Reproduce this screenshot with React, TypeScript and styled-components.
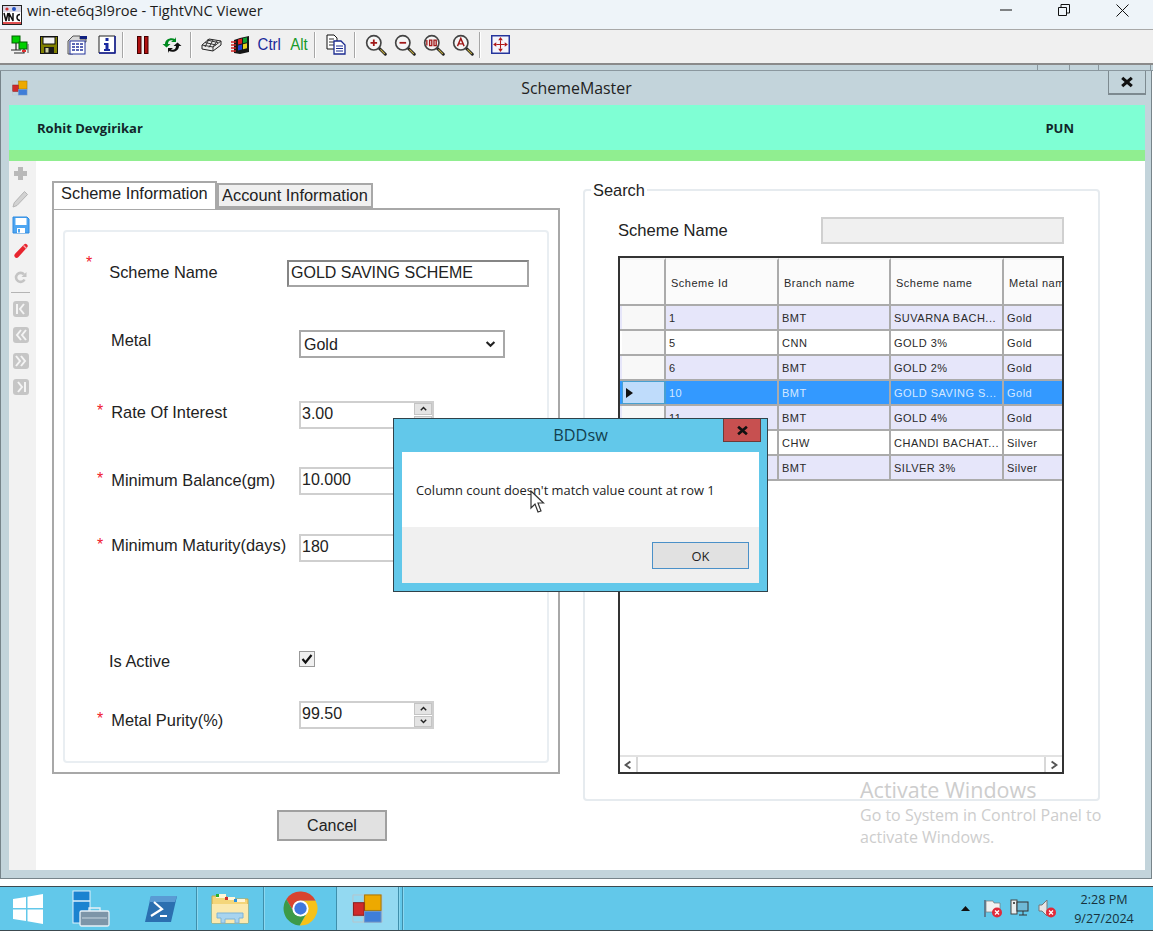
import React from "react";
import styled, { createGlobalStyle } from "styled-components";

const GlobalStyle = createGlobalStyle`
  html, body {
    margin: 0;
    padding: 0;
    background: #ffffff;
  }
  * {
    box-sizing: border-box;
  }
`;

const Screen = styled.div`
  position: relative;
  width: 1153px;
  height: 931px;
  overflow: hidden;
  display: flex;
  flex-direction: column;
  background: #ffffff;
  font-family: "Liberation Sans", Arial, sans-serif;
  color: #222;
`;

/* ---------- viewer chrome ---------- */

const ViewerTitle = styled.div`
  height: 29px;
  flex: none;
  display: flex;
  align-items: center;
  background: #eef4f9;
  padding-left: 2px;
`;

const ViewerCaption = styled.span`
  font-family: "Open Sans", sans-serif;
  font-size: 14.6px;
  color: #1c1c1c;
  margin-left: 5px;
  flex: 1;
  padding-bottom: 9px;
`;

const ViewerControl = styled.div`
  width: 58px;
  height: 29px;
  display: flex;
  align-items: center;
  justify-content: center;
  padding-bottom: 9px;
  margin-right: ${(p: { $right?: number }) => p.$right ?? 0}px;
`;

const Toolbar = styled.div`
  height: 36px;
  flex: none;
  display: flex;
  align-items: center;
  padding: 0 0 4px 5px;
  background: #f0f0f0;
  border-top: 1px solid #a8a8a8;
  border-bottom: 2px solid #8a8a8a;
`;

const ToolButton = styled.div`
  width: 29px;
  height: 28px;
  flex: none;
  display: flex;
  align-items: center;
  justify-content: center;
`;

const ToolText = styled.span<{ $color: string }>`
  font-size: 17px;
  color: ${(p) => p.$color};
  transform: scaleX(0.88);
`;

const ToolSep = styled.div<{ $left: number; $right: number }>`
  width: 2px;
  height: 26px;
  flex: none;
  margin: 0 ${(p) => p.$right}px 0 ${(p) => p.$left}px;
  background: #a6a6a6;
  border-right: 1px solid #ffffff;
`;

/* ---------- remote window ---------- */

const RemoteStrip = styled.div`
  height: 6px;
  flex: none;
  display: flex;
  justify-content: flex-end;
  background: #c3d4db;
  border-bottom: 1px solid #8a979e;
`;

const StripCell = styled.div<{ $width: number }>`
  width: ${(p) => p.$width}px;
  border-left: 1px solid #8a979e;
`;

const RemoteWindow = styled.div`
  width: 1152px;
  height: 808px;
  flex: none;
  display: flex;
  flex-direction: column;
  background: #c3d4db;
  border-left: 1px solid #77848a;
  border-right: 1px solid #77848a;
  border-bottom: 1px solid #77848a;
  padding: 0 6px 8px 8px;
`;

const WindowTitle = styled.div`
  height: 34px;
  flex: none;
  display: flex;
  align-items: flex-start;
  margin-left: -8px;
  margin-right: -6px;
`;

const WindowIconWrap = styled.div`
  width: 36px;
  padding: 9px 0 0 11px;
  flex: none;
`;

const WindowCaption = styled.div`
  flex: 1;
  text-align: center;
  font-family: "Open Sans", sans-serif;
  font-size: 15.9px;
  line-height: 35px;
  color: #222;
  padding-left: 8px;
`;

const WindowClose = styled.div`
  width: 38px;
  height: 24px;
  margin-right: 5px;
  display: flex;
  align-items: center;
  justify-content: center;
  border: 1px solid #7d8a90;
  border-top: none;
  border-bottom-width: 2px;
`;

const GreenBar = styled.div`
  height: 45px;
  flex: none;
  display: flex;
  align-items: center;
  justify-content: space-between;
  padding: 0 71px 0 28px;
  background: #7fffd4;
  font-family: "Open Sans", sans-serif;
  font-weight: 700;
  font-size: 13px;
  color: #12262a;
`;

const GreenLine = styled.div`
  height: 11px;
  flex: none;
  background: #90ee90;
`;

const WindowBody = styled.div`
  flex: 1;
  min-height: 0;
  display: flex;
  background: #ffffff;
`;

/* ---------- side toolbar ---------- */

const SideBar = styled.div`
  width: 27px;
  flex: none;
  display: flex;
  flex-direction: column;
  padding-right: 4px;
  background: #f2f2f2;

  > :first-child {
    height: 25px;
  }
`;

const SideButton = styled.div`
  height: 26px;
  flex: none;
  display: flex;
  align-items: center;
  justify-content: center;
`;

const SideSep = styled.div`
  height: 1px;
  flex: none;
  margin: 2px 2px 3px;
  background: #b4b4b4;
`;

/* ---------- left form ---------- */

const FormColumn = styled.div`
  width: 524px;
  flex: none;
  padding: 20px 0 0 16px;
`;

const TabStrip = styled.div`
  height: 27px;
  display: flex;
  align-items: flex-end;
`;

const Tab = styled.div<{ $active?: boolean }>`
  height: ${(p) => (p.$active ? 28 : 25)}px;
  width: ${(p) => (p.$active ? 165 : 156)}px;
  display: flex;
  align-items: center;
  padding-left: ${(p) => (p.$active ? 7 : 3)}px;
  padding-bottom: ${(p) => (p.$active ? 5 : 0)}px;
  font-size: 16.4px;
  color: #222;
  background: ${(p) => (p.$active ? "#ffffff" : "#f0f0f0")};
  border: 2px solid #a8a8a8;
  border-bottom: ${(p) => (p.$active ? "none" : "2px solid #a8a8a8")};
  margin-bottom: ${(p) => (p.$active ? -1 : 0)}px;
  position: relative;
  z-index: ${(p) => (p.$active ? 1 : 0)};
`;

const TabPage = styled.div`
  width: 508px;
  height: 566px;
  padding: 20px 9px 9px 9px;
  border: 2px solid #a8a8a8;
`;

const FormGroup = styled.div`
  height: 533px;
  border: 2px solid #e9eef2;
  border-radius: 4px;
`;

const FieldRow = styled.div<{ $top: number }>`
  display: flex;
  align-items: flex-start;
  margin-top: ${(p) => p.$top}px;
`;

const LabelCell = styled.div<{ $width: number; $pad: number }>`
  width: ${(p) => p.$width}px;
  flex: none;
  display: flex;
  align-items: flex-start;
  padding-left: ${(p) => p.$pad}px;
`;

const Star = styled.span<{ $top: number; $gap: number }>`
  font-size: 16px;
  line-height: 16px;
  color: #f0202c;
  margin-top: ${(p) => p.$top}px;
  margin-right: ${(p) => p.$gap}px;
`;

const FieldLabel = styled.span<{ $top: number }>`
  font-size: 16.4px;
  line-height: 18px;
  color: #222;
  margin-top: ${(p) => p.$top}px;
  white-space: nowrap;
`;

const TextBox = styled.input`
  width: 242px;
  height: 27px;
  padding: 0 0 2px 2px;
  border: 2px solid #a4a4a4;
  border-top-color: #858585;
  border-left-color: #858585;
  background: #ffffff;
  font: 16px "Liberation Sans", Arial, sans-serif;
  color: #222;
  outline: none;
`;

const SelectBox = styled.div`
  width: 206px;
  height: 28px;
  display: flex;
  align-items: center;
  justify-content: space-between;
  padding: 1px 6px 0 3px;
  border: 2px solid #a8a8a8;
  font-size: 16px;
`;

const SpinBox = styled.div`
  width: 135px;
  height: 28px;
  display: flex;
  border: 2px solid #cfcfcf;
  background: #ffffff;
`;

const SpinValue = styled.div`
  flex: 1;
  font-size: 16px;
  line-height: 22px;
  padding-left: 1px;
`;

const SpinButtons = styled.div`
  width: 18px;
  flex: none;
  display: flex;
  flex-direction: column;
  gap: 1px;
`;

const SpinButton = styled.div`
  flex: 1;
  display: flex;
  align-items: center;
  justify-content: center;
  background: #e4e4e4;
  border: 1px solid #c4c4c4;
`;

const CheckBox = styled.div`
  width: 16px;
  height: 16px;
  display: flex;
  align-items: center;
  justify-content: center;
  border: 1px solid #999;
  background: #f0f0f0;
`;

const CancelButton = styled.div`
  width: 110px;
  height: 31px;
  margin: 36px 0 0 225px;
  display: flex;
  align-items: center;
  justify-content: center;
  background: #e1e1e1;
  border: 2px solid #a0a0a0;
  font-size: 16px;
  color: #222;
`;

/* ---------- search ---------- */

const SearchGroup = styled.fieldset`
  width: 517px;
  height: 620px;
  flex: none;
  margin: 20px 0 0 23px;
  padding: 18px 34px 0 33px;
  border: 2px solid #e6ebef;
  border-radius: 4px;
`;

const SearchLegend = styled.legend`
  padding: 0 2px;
  margin-left: -27px;
  font-size: 16.4px;
  line-height: 18px;
  color: #222;
`;

const SearchRow = styled.div`
  height: 27px;
  display: flex;
  align-items: center;
  justify-content: space-between;
  font-size: 16.6px;
`;

const SearchInput = styled.div`
  width: 243px;
  height: 27px;
  background: #f0f0f0;
  border: 2px solid #d0d0d0;
`;

const GridFrame = styled.div`
  width: 446px;
  height: 518px;
  margin-top: 12px;
  display: flex;
  flex-direction: column;
  border: 2px solid #333;
  background: #ffffff;
  font-size: 11px;
  letter-spacing: 0.5px;
  color: #2a2a2a;
  overflow: hidden;
`;

const GridRow = styled.div<{ $height: number; $bg?: string; $fg?: string }>`
  height: ${(p) => p.$height}px;
  flex: none;
  display: grid;
  grid-template-columns: 46px 113px 112px 113px 1fr;
  background: ${(p) => p.$bg ?? "#ffffff"};
  color: ${(p) => p.$fg ?? "#2a2a2a"};
  border-bottom: 2px solid #ababab;
`;

const HeadCell = styled.div`
  display: flex;
  align-items: center;
  padding-left: 5px;
  padding-top: 1px;
  white-space: nowrap;
  overflow: hidden;
  background: #fbfbfb;
  border-right: 2px solid #ababab;
  border-top: 2px solid #f3f3f3;

  &:last-child {
    border-right: none;
  }
`;

const RowHead = styled.div<{ $current?: boolean }>`
  display: flex;
  align-items: center;
  padding-left: 3px;
  background: ${(p) => (p.$current ? "#bfdcfb" : "#f8f8f8")};
  border: ${(p) => (p.$current ? "1px solid #48a0d0" : "none")};
  border-right: 2px solid ${(p) => (p.$current ? "#48a0d0" : "#ababab")};
  margin-left: 2px;
`;

const DataCell = styled.div`
  display: flex;
  align-items: center;
  padding: 1px 0 0 3px;
  white-space: nowrap;
  overflow: hidden;
  border-right: 2px solid #ababab;

  &:last-child {
    border-right: none;
  }
`;

const GridBlank = styled.div`
  flex: 1;
`;

const HScroll = styled.div`
  height: 17px;
  flex: none;
  display: flex;
  align-items: stretch;
  justify-content: space-between;
  border-top: 2px solid #e2e2e2;
  background: #ffffff;
`;

const ScrollArrow = styled.div<{ $side: "left" | "right" }>`
  width: 18px;
  display: flex;
  align-items: center;
  justify-content: center;
  border-${(p) => (p.$side === "left" ? "right" : "left")}: 2px solid #d8d8d8;
`;

/* ---------- overlays ---------- */

const Dialog = styled.div`
  position: absolute;
  left: 393px;
  top: 418px;
  width: 375px;
  height: 174px;
  display: flex;
  flex-direction: column;
  background: #62c8ea;
  border: 1px solid #30424a;
  padding: 0 8px 8px;
  z-index: 5;
`;

const DialogTitle = styled.div`
  height: 33px;
  flex: none;
  text-align: center;
  line-height: 33px;
  font-family: "Open Sans", sans-serif;
  font-size: 16.3px;
  color: #12404f;
`;

const DialogClose = styled.div`
  position: absolute;
  top: 0;
  right: 6px;
  width: 38px;
  height: 23px;
  display: flex;
  align-items: center;
  justify-content: center;
  background: #c75050;
  border: 1px solid #6d3a38;
  border-top: none;
`;

const DialogMessage = styled.div`
  height: 75px;
  flex: none;
  padding: 30px 0 0 14px;
  background: #ffffff;
  font-family: "Open Sans", sans-serif;
  font-size: 12.9px;
  line-height: 16px;
  color: #222;
  white-space: nowrap;
`;

const DialogFooter = styled.div`
  flex: 1;
  display: flex;
  align-items: center;
  justify-content: flex-end;
  padding: 1px 10px 0 0;
  background: #f0f0f0;
`;

const OkButton = styled.div`
  width: 97px;
  height: 27px;
  display: flex;
  align-items: center;
  justify-content: center;
  background: #e1e1e1;
  border: 1px solid #4a90c8;
  font-family: "Open Sans", sans-serif;
  font-size: 12.9px;
  color: #222;
`;

const Pointer = styled.svg`
  position: absolute;
  left: 530px;
  top: 490px;
  z-index: 6;
`;

const Watermark = styled.div`
  position: absolute;
  left: 860px;
  top: 776px;
  z-index: 4;
  font-family: "Open Sans", sans-serif;
  color: #cdcdcd;
  pointer-events: none;
`;

const WatermarkTitle = styled.div`
  font-size: 21.5px;
  line-height: 28px;
`;

const WatermarkLine = styled.div`
  font-size: 16px;
  line-height: 22px;
  white-space: nowrap;
`;

/* ---------- taskbar ---------- */

const Gap = styled.div`
  height: 7px;
  flex: none;
  background: #ffffff;
`;

const Taskbar = styled.div`
  flex: 1;
  min-height: 0;
  display: flex;
  align-items: stretch;
  background: #62c8ea;
  border-top: 1px solid #3c4a50;
  border-bottom: 1px solid #3c4a50;
`;

const TaskItem = styled.div<{ $width: number; $active?: boolean; $edge?: boolean }>`
  width: ${(p) => p.$width}px;
  flex: none;
  display: flex;
  align-items: center;
  justify-content: center;
  background: ${(p) => (p.$active ? "#93d9f1" : "transparent")};
  border-right: ${(p) => (p.$edge ? "1px solid #3f8fab" : "none")};
  box-shadow: ${(p) => (p.$edge ? "1px 0 0 #8bd8f0" : "none")};
`;

const Tray = styled.div`
  flex: 1;
  display: flex;
  align-items: center;
  justify-content: flex-end;
`;

const TrayIcon = styled.div<{ $width: number }>`
  width: ${(p) => p.$width}px;
  flex: none;
  display: flex;
  align-items: center;
  justify-content: center;
`;

const Clock = styled.div`
  width: 86px;
  flex: none;
  padding-right: 12px;
  text-align: center;
  font-family: "Open Sans", sans-serif;
  font-size: 12.6px;
  line-height: 19px;
  white-space: nowrap;
  color: #17323c;
`;

/* ---------- drawings ---------- */

const VncLogo = () => (
  <svg width="20" height="20" viewBox="0 0 20 20">
    <rect x="0.5" y="0.5" width="19" height="19" fill="#ffffff" stroke="#222" />
    <rect x="1" y="1" width="18" height="6" fill="#d8d8e8" />
    <circle cx="5" cy="4" r="1.6" fill="#d03030" />
    <circle cx="12" cy="4" r="2" fill="#2050c0" />
    <path d="M2 8l2 8 2-8M7 16V8l4 8V8" fill="none" stroke="#111" strokeWidth="1.5" />
    <path d="M18 9.5a3 3 0 1 0 0 6" fill="none" stroke="#111" strokeWidth="1.5" />
    <rect x="1" y="17" width="18" height="2" fill="#e05050" />
  </svg>
);

const ConnIcon = () => (
  <svg width="20" height="20" viewBox="0 0 20 20">
    <rect x="2" y="1" width="8" height="7" fill="#00d000" stroke="#006000" />
    <rect x="9" y="7" width="8" height="7" fill="#00d000" stroke="#006000" />
    <path d="M1 15h10M6 8v7M14 14v4H4" stroke="#222" strokeWidth="1.2" fill="none" />
    <rect x="12" y="15" width="4" height="2" fill="#e03030" />
    <path d="M18 9v9" stroke="#555" />
  </svg>
);

const SaveIcon = () => (
  <svg width="18" height="18" viewBox="0 0 18 18">
    <rect x="0.5" y="0.5" width="17" height="17" fill="#808000" stroke="#111" />
    <rect x="3" y="1" width="12" height="7" fill="#f4f4f4" stroke="#111" />
    <rect x="4" y="11" width="10" height="6.5" fill="#1a1a1a" />
    <rect x="5.5" y="12" width="3" height="4.5" fill="#d0d0a0" />
  </svg>
);

const PropsIcon = () => (
  <svg width="21" height="20" viewBox="0 0 21 20">
    <path d="M1 6l5-5h7v3h6v3H6v12H1z" fill="#d8d8d8" stroke="#555" />
    <rect x="13" y="1" width="7" height="3" fill="#102080" />
    <rect x="3" y="6" width="15" height="13" fill="#ffffff" stroke="#24349c" />
    <path d="M5 9h11M5 12h11M5 15h11" stroke="#24349c" strokeWidth="1.4" strokeDasharray="3 1" />
  </svg>
);

const InfoIcon = () => (
  <svg width="18" height="19" viewBox="0 0 18 19">
    <path d="M1 1h16v17H1z" fill="#ffffff" stroke="#222" />
    <path d="M17 1v17H1" fill="none" stroke="#16209a" strokeWidth="1.5" />
    <rect x="7.5" y="3" width="3" height="3" fill="#1a2aa0" />
    <path d="M6 8h4.5v6H12v2H6v-2h1.5V10H6z" fill="#1a2aa0" />
  </svg>
);

const PauseIcon = () => (
  <svg width="12" height="18" viewBox="0 0 12 18">
    <rect x="0.5" y="0.5" width="3.5" height="17" fill="#b01010" stroke="#400" />
    <rect x="7.5" y="0.5" width="3.5" height="17" fill="#b01010" stroke="#400" />
  </svg>
);

const RefreshIcon = () => (
  <svg width="20" height="18" viewBox="0 0 20 18">
    <path d="M3 8C3 3 9 1 13 3l1-2v5H9l2-1.4C8 3.5 6 5 6 8H8.5L4.500 11.500 .5 8z" fill="#008a20" />
    <path d="M17 10c0 5-6 7-10 5l-1 2v-5h5l-2 1.400c3 1 5-.4 5-3.400H11.500l4-3.500 4 3.500z" fill="#111" />
  </svg>
);

const KeysIcon = () => (
  <svg width="21" height="16" viewBox="0 0 21 16">
    <path d="M1 8l7-6 12 2v4l-8 6-11-2z" fill="#ececec" stroke="#222" />
    <path d="M1 8l11 2 8-6M12 10v4M6 3l11 2.500M4 5.500l11 2.500M8 2l-4 8M12 3L8 10.500M16 4l-4 6" fill="none" stroke="#333" />
  </svg>
);

const WinKeyIcon = () => (
  <svg width="19" height="20" viewBox="0 0 19 20">
    <path d="M3 5l6-2 9-2v16l-9 2-6-1z" fill="#161616" />
    <path d="M7 4.500l4-1v5l-4 1z" fill="#e02020" />
    <path d="M12 3.200l4-1v5l-4 1z" fill="#10a030" />
    <path d="M7 10.500l4-1v5l-4 1z" fill="#2040d0" />
    <path d="M12 9.200l4-1v5l-4 1z" fill="#e8d020" />
    <path d="M0 7h5M0 10h5M0 13h5M0 16h5" stroke="#d02020" strokeWidth="1.500" />
  </svg>
);

const CopyIcon = () => (
  <svg width="21" height="21" viewBox="0 0 21 21">
    <path d="M1 1h7l3 3v11H1z" fill="#ffffff" stroke="#111" />
    <path d="M3 5h5M3 8h6M3 11h6" stroke="#333" />
    <path d="M8 7h7l4 4v9H8z" fill="#ffffff" stroke="#1a2a90" strokeWidth="1.300" />
    <path d="M10 12h7M10 14.500h7M10 17h7" stroke="#1a2a90" />
  </svg>
);

const Magnifier = ({ children }: { children?: React.ReactNode }) => (
  <svg width="22" height="22" viewBox="0 0 20 20">
    <path d="M12 12l6.500 6.500" stroke="#222" strokeWidth="2.600" strokeLinecap="round" />
    <path d="M14 14l4 4" stroke="#c8b040" strokeWidth="1" />
    <circle cx="8" cy="8" r="6.500" fill="#f6f6f6" stroke="#444" strokeWidth="1.500" />
    {children}
  </svg>
);

const FullIcon = () => (
  <svg width="19" height="19" viewBox="0 0 18 18">
    <rect x="0.7" y="0.700" width="16.600" height="16.600" fill="#f4f4fb" stroke="#24349c" strokeWidth="1.400" />
    <path d="M9 2l2.200 3H6.800zM9 16l-2.200-3h4.400zM2 9l3-2.200v4.400zM16 9l-3 2.200V6.800z" fill="#b01818" />
    <path d="M9 5v8M5 9h8" stroke="#b01818" />
  </svg>
);

const AppTiles = ({ size }: { size: number }) => (
  <svg width={size} height={size} viewBox="0 0 32 32">
    <path d="M1 2h30v28H1z" fill="none" stroke="#b9c4c9" />
    <path d="M12 2v28M1 11h11M1 24h11" stroke="#b9c4c9" />
    <rect x="13" y="2" width="17" height="16" fill="#eda900" stroke="#a57400" />
    <rect x="1.500" y="10" width="11" height="13" fill="#d02a2a" stroke="#8a1c1c" />
    <rect x="13" y="19" width="17" height="11" fill="#3f7ed8" stroke="#6d94c8" />
  </svg>
);

const PlusGlyph = () => (
  <svg width="15" height="15" viewBox="0 0 15 15">
    <path d="M5 1h5v4h4v5h-4v4H5v-4H1V5h4z" fill="#b9b9b9" />
  </svg>
);

const PencilGlyph = () => (
  <svg width="17" height="18" viewBox="0 0 17 18">
    <path d="M12.500 1.500l3 3L5 15.500 1 17l1.200-4.200z" fill="#d2d2d2" stroke="#b4b4b4" />
  </svg>
);

const DiskGlyph = () => (
  <svg width="18" height="18" viewBox="0 0 18 18">
    <path d="M1 1h14l2 2v14H1z" fill="#4ea6f2" stroke="#2f8ae0" />
    <rect x="3.500" y="2" width="11" height="7" fill="#ffffff" />
    <rect x="5" y="12" width="8" height="5" fill="#ffffff" />
    <rect x="6" y="13" width="2" height="3.500" fill="#4ea6f2" />
  </svg>
);

const EraserGlyph = () => (
  <svg width="16" height="16" viewBox="0 0 16 16">
    <path d="M11 1.500c1-1 2-1 3 0s1 2 0 3L5.500 14c-1.200 1.200-2.500 1.200-3.500.2s-1-2.300.1-3.500z" fill="#e8252f" />
    <path d="M10.500 2.500l3 3" stroke="#f4b0b0" strokeWidth="1.200" />
  </svg>
);

const RetryGlyph = () => (
  <svg width="13" height="13" viewBox="0 0 13 13">
    <path d="M10.500 8.500A4.500 4.500 0 1 1 10 3.500" fill="none" stroke="#c4c4c4" strokeWidth="2.600" />
    <path d="M12.500 1v5h-5z" fill="#c4c4c4" />
  </svg>
);

const NavGlyph = ({ d }: { d: string }) => (
  <svg width="16" height="16" viewBox="0 0 16 16">
    <rect width="16" height="16" rx="3" fill="#c6c6c6" />
    <path d={d} fill="none" stroke="#f4f4f4" strokeWidth="2" />
  </svg>
);

const Chevron = ({ dir, size, color }: { dir: "up" | "down" | "left" | "right"; size: number; color: string }) => {
  const paths = {
    up: "M2 7l3-3 3 3",
    down: "M2 3l3 3 3-3",
    left: "M7 2L3 5l4 3",
    right: "M3 2l4 3-4 3",
  };
  return (
    <svg width={size} height={size} viewBox="0 0 10 10">
      <path d={paths[dir]} fill="none" stroke={color} strokeWidth="1.600" />
    </svg>
  );
};

const CloseCross = ({ size, weight }: { size: number; weight: number }) => (
  <svg width={size} height={size} viewBox="0 0 10 10">
    <path d="M1 1.500l8 7M9 1.500l-8 7" stroke="#111" strokeWidth={weight} />
  </svg>
);

const StartLogo = () => (
  <svg width="30" height="30" viewBox="0 0 30 30">
    <path d="M0 5l13-2v11H0zM14.500 2.800L30 0v14H14.500zM0 15.500h13V27L0 25zM14.500 15.500H30V30l-15.500-2.700z" fill="#ffffff" />
  </svg>
);

const ServerManagerIcon = () => (
  <svg width="38" height="38" viewBox="0 0 38 38">
    <rect x="1" y="1" width="17" height="32" fill="#1b83d0" stroke="#dff1fb" />
    <path d="M1 11h17" stroke="#dff1fb" strokeWidth="1.500" />
    <rect x="8" y="21" width="29" height="15" rx="1.500" fill="#7d95a8" stroke="#e6f0f6" strokeWidth="1.300" />
    <path d="M17 21v-3h11v3" fill="none" stroke="#e6f0f6" strokeWidth="1.300" />
    <path d="M10 28h25" stroke="#c8d6e0" />
  </svg>
);

const PowerShellIcon = () => (
  <svg width="34" height="30" viewBox="0 0 34 30">
    <path d="M7 2h26l-6 26H1z" fill="#2b6fb0" />
    <path d="M7 2h26l-2 6H5z" fill="#5a9bd4" />
    <path d="M10 8l8 7-11 7" fill="none" stroke="#ffffff" strokeWidth="2.200" />
    <path d="M16 22h7" stroke="#ffffff" strokeWidth="2" />
  </svg>
);

const ExplorerIcon = () => (
  <svg width="38" height="32" viewBox="0 0 38 32">
    <path d="M1 3h14l2 3h20v24H1z" fill="#f4d67a" stroke="#c9a84a" />
    <rect x="5" y="1" width="10" height="4" fill="#fff6d8" />
    <rect x="5" y="1" width="3" height="3" fill="#28b030" />
    <rect x="14" y="4" width="10" height="3" fill="#fff6d8" />
    <rect x="14" y="4" width="3" height="3" fill="#d03030" />
    <rect x="23" y="6" width="11" height="3" fill="#fff6d8" />
    <rect x="23" y="6" width="3" height="3" fill="#2a90e0" />
    <path d="M1 11h36v19H1z" fill="#fbe9ae" />
    <path d="M6 20h26v5h-4v5h-4v-4H14v4h-4v-5H6z" fill="#a8d4ef" stroke="#7db4d8" />
  </svg>
);

const ChromeIcon = () => (
  <svg width="37" height="37" viewBox="0 0 48 48">
    <path d="M24 14H43.600A22 22 0 0 0 5.540 12.030L15.340 29A10 10 0 0 1 24 14Z" fill="#d9442f" />
    <path d="M32.660 29L22.860 45.970A22 22 0 0 0 43.600 14H24A10 10 0 0 1 32.660 29Z" fill="#f6c21a" />
    <path d="M15.340 29L5.540 12.030A22 22 0 0 0 22.860 45.970L32.660 29A10 10 0 0 1 15.340 29Z" fill="#3c9a48" />
    <circle cx="24" cy="24" r="10.500" fill="#ffffff" />
    <circle cx="24" cy="24" r="8" fill="#3f78e0" />
  </svg>
);

const Badge = () => (
  <g>
    <circle cx="14" cy="13.500" r="5" fill="#e02a3a" />
    <path d="M12 11.500l4 4M16 11.500l-4 4" stroke="#ffffff" strokeWidth="1.300" />
  </g>
);

const FlagTray = () => (
  <svg width="19" height="19" viewBox="0 0 19 19">
    <path d="M2 1v17" stroke="#556" strokeWidth="1.300" />
    <path d="M3 2h7l1 2h6v9H3z" fill="#f2f2f2" stroke="#777" strokeWidth="0.700" />
    <Badge />
  </svg>
);

const NetworkTray = () => (
  <svg width="19" height="19" viewBox="0 0 19 19">
    <rect x="1" y="1" width="6" height="14" fill="#e8eef0" stroke="#444" />
    <rect x="3" y="3" width="2" height="2" fill="#555" />
    <rect x="7" y="3" width="11" height="9" fill="#6fb9d6" stroke="#333" />
    <path d="M9 16h8M13 12v4" stroke="#333" />
  </svg>
);

const SpeakerTray = () => (
  <svg width="19" height="19" viewBox="0 0 19 19">
    <path d="M2 6h3l5-5v16l-5-5H2z" fill="#e6e6e6" stroke="#777" />
    <Badge />
  </svg>
);

const rows = [
  { id: "1", branch: "BMT", scheme: "SUVARNA BACH...", metal: "Gold" },
  { id: "5", branch: "CNN", scheme: "GOLD 3%", metal: "Gold" },
  { id: "6", branch: "BMT", scheme: "GOLD 2%", metal: "Gold" },
  { id: "10", branch: "BMT", scheme: "GOLD SAVING S...", metal: "Gold", current: true },
  { id: "11", branch: "BMT", scheme: "GOLD 4%", metal: "Gold" },
  { id: "12", branch: "CHW", scheme: "CHANDI BACHAT...", metal: "Silver" },
  { id: "13", branch: "BMT", scheme: "SILVER 3%", metal: "Silver" },
];

const Spinner = ({ value }: { value: string }) => (
  <SpinBox>
    <SpinValue>{value}</SpinValue>
    <SpinButtons>
      <SpinButton>
        <Chevron dir="up" size={9} color="#222" />
      </SpinButton>
      <SpinButton>
        <Chevron dir="down" size={9} color="#222" />
      </SpinButton>
    </SpinButtons>
  </SpinBox>
);

function App() {
  return (
    <Screen>
      <GlobalStyle />
      <ViewerTitle>
        <VncLogo />
        <ViewerCaption>win-ete6q3l9roe - TightVNC Viewer</ViewerCaption>
        <ViewerControl>
          <svg width="12" height="12" viewBox="0 0 12 12"><path d="M0 6h12" stroke="#111" /></svg>
        </ViewerControl>
        <ViewerControl>
          <svg width="12" height="12" viewBox="0 0 12 12"><path d="M.5 3.500h8v8h-8zM3 3V.5h8.500V9H9" fill="none" stroke="#111" /></svg>
        </ViewerControl>
        <ViewerControl $right={2}>
          <svg width="13" height="13" viewBox="0 0 13 13"><path d="M.5.5l12 12M12.500.5l-12 12" stroke="#111" /></svg>
        </ViewerControl>
      </ViewerTitle>
      <Toolbar>
        <ToolButton><ConnIcon /></ToolButton>
        <ToolButton><SaveIcon /></ToolButton>
        <ToolButton><PropsIcon /></ToolButton>
        <ToolButton><InfoIcon /></ToolButton>
        <ToolSep $left={1} $right={4} />
        <ToolButton><PauseIcon /></ToolButton>
        <ToolButton><RefreshIcon /></ToolButton>
        <ToolSep $left={4} $right={5} />
        <ToolButton><KeysIcon /></ToolButton>
        <ToolButton><WinKeyIcon /></ToolButton>
        <ToolButton><ToolText $color="#1a2a9a">Ctrl</ToolText></ToolButton>
        <ToolButton><ToolText $color="#189a28">Alt</ToolText></ToolButton>
        <ToolSep $left={1} $right={6} />
        <ToolButton><CopyIcon /></ToolButton>
        <ToolSep $left={3} $right={5} />
        <ToolButton>
          <Magnifier><path d="M5 8h6M8 5v6" stroke="#a01818" strokeWidth="1.600" /></Magnifier>
        </ToolButton>
        <ToolButton>
          <Magnifier><path d="M5 8h6" stroke="#a01818" strokeWidth="1.600" /></Magnifier>
        </ToolButton>
        <ToolButton>
          <Magnifier><path d="M3.500 5.500v5M6 5.500h2v5H6zM10 5.500h2v5h-2z" fill="none" stroke="#a01818" strokeWidth="1.200" /></Magnifier>
        </ToolButton>
        <ToolButton>
          <Magnifier><path d="M5 11l3-7 3 7M6 9h4" fill="none" stroke="#a01818" strokeWidth="1.300" /></Magnifier>
        </ToolButton>
        <ToolSep $left={2} $right={5} />
        <ToolButton><FullIcon /></ToolButton>
      </Toolbar>

      <RemoteStrip>
        <StripCell $width={32} />
        <StripCell $width={29} />
        <StripCell $width={52} />
        <StripCell $width={3} />
      </RemoteStrip>

      <RemoteWindow>
        <WindowTitle>
          <WindowIconWrap><AppTiles size={16} /></WindowIconWrap>
          <WindowCaption>SchemeMaster</WindowCaption>
          <WindowClose><CloseCross size={12} weight={2.6} /></WindowClose>
        </WindowTitle>
        <GreenBar>
          <span>Rohit Devgirikar</span>
          <span>PUN</span>
        </GreenBar>
        <GreenLine />
        <WindowBody>
          <SideBar>
            <SideButton><PlusGlyph /></SideButton>
            <SideButton><PencilGlyph /></SideButton>
            <SideButton><DiskGlyph /></SideButton>
            <SideButton><EraserGlyph /></SideButton>
            <SideButton><RetryGlyph /></SideButton>
            <SideSep />
            <SideButton><NavGlyph d="M4 3v10M11 3L7 8l4 5" /></SideButton>
            <SideButton><NavGlyph d="M8 3L4 8l4 5M13 3L9 8l4 5" /></SideButton>
            <SideButton><NavGlyph d="M3 3l4 5-4 5M8 3l4 5-4 5" /></SideButton>
            <SideButton><NavGlyph d="M12 3v10M5 3l4 5-4 5" /></SideButton>
          </SideBar>

          <FormColumn>
            <TabStrip>
              <Tab $active>Scheme Information</Tab>
              <Tab>Account Information</Tab>
            </TabStrip>
            <TabPage>
              <FormGroup>
                <FieldRow $top={28}>
                  <LabelCell $width={222} $pad={21}>
                    <Star $top={-5} $gap={17}>*</Star>
                    <FieldLabel $top={3}>Scheme Name</FieldLabel>
                  </LabelCell>
                  <TextBox readOnly value="GOLD SAVING SCHEME" />
                </FieldRow>
                <FieldRow $top={43}>
                  <LabelCell $width={234} $pad={46}>
                    <FieldLabel $top={1}>Metal</FieldLabel>
                  </LabelCell>
                  <SelectBox>
                    Gold
                    <Chevron dir="down" size={13} color="#222" />
                  </SelectBox>
                </FieldRow>
                <FieldRow $top={43}>
                  <LabelCell $width={234} $pad={32}>
                    <Star $top={2} $gap={8}>*</Star>
                    <FieldLabel $top={2}>Rate Of Interest</FieldLabel>
                  </LabelCell>
                  <Spinner value="3.00" />
                </FieldRow>
                <FieldRow $top={38}>
                  <LabelCell $width={234} $pad={32}>
                    <Star $top={4} $gap={8}>*</Star>
                    <FieldLabel $top={4}>Minimum Balance(gm)</FieldLabel>
                  </LabelCell>
                  <Spinner value="10.000" />
                </FieldRow>
                <FieldRow $top={39}>
                  <LabelCell $width={234} $pad={32}>
                    <Star $top={3} $gap={8}>*</Star>
                    <FieldLabel $top={2}>Minimum Maturity(days)</FieldLabel>
                  </LabelCell>
                  <Spinner value="180" />
                </FieldRow>
                <FieldRow $top={89}>
                  <LabelCell $width={234} $pad={44}>
                    <FieldLabel $top={1}>Is Active</FieldLabel>
                  </LabelCell>
                  <CheckBox>
                    <svg width="12" height="12" viewBox="0 0 12 12">
                      <path d="M1.500 6l3 3.500L10.500 2" fill="none" stroke="#111" strokeWidth="2.200" />
                    </svg>
                  </CheckBox>
                </FieldRow>
                <FieldRow $top={31}>
                  <LabelCell $width={234} $pad={32}>
                    <Star $top={10} $gap={8}>*</Star>
                    <FieldLabel $top={10}>Metal Purity(%)</FieldLabel>
                  </LabelCell>
                  <Spinner value="99.50" />
                </FieldRow>
              </FormGroup>
            </TabPage>
            <CancelButton>Cancel</CancelButton>
          </FormColumn>

          <SearchGroup>
            <SearchLegend>Search</SearchLegend>
            <SearchRow>
              Scheme Name
              <SearchInput />
            </SearchRow>
            <GridFrame>
              <GridRow $height={48}>
                <HeadCell />
                <HeadCell>Scheme Id</HeadCell>
                <HeadCell>Branch name</HeadCell>
                <HeadCell>Scheme name</HeadCell>
                <HeadCell>Metal name</HeadCell>
              </GridRow>
              {rows.map((row, index) => (
                <GridRow
                  key={row.id}
                  $height={25}
                  $bg={row.current ? "#3399ff" : index % 2 === 0 ? "#e6e6fa" : "#ffffff"}
                  $fg={row.current ? "#d4e8ff" : "#2a2a2a"}
                >
                  <RowHead $current={row.current}>
                    {row.current && (
                      <svg width="7" height="10" viewBox="0 0 7 10"><path d="M0 0l7 5-7 5z" fill="#111" /></svg>
                    )}
                  </RowHead>
                  <DataCell>{row.id}</DataCell>
                  <DataCell>{row.branch}</DataCell>
                  <DataCell>{row.scheme}</DataCell>
                  <DataCell>{row.metal}</DataCell>
                </GridRow>
              ))}
              <GridBlank />
              <HScroll>
                <ScrollArrow $side="left"><Chevron dir="left" size={12} color="#555" /></ScrollArrow>
                <ScrollArrow $side="right"><Chevron dir="right" size={12} color="#555" /></ScrollArrow>
              </HScroll>
            </GridFrame>
          </SearchGroup>
        </WindowBody>
      </RemoteWindow>
      <Gap />
      <Taskbar>
        <TaskItem $width={56}><StartLogo /></TaskItem>
        <TaskItem $width={70}><ServerManagerIcon /></TaskItem>
        <TaskItem $width={71} $edge><PowerShellIcon /></TaskItem>
        <TaskItem $width={67} $edge><ExplorerIcon /></TaskItem>
        <TaskItem $width={73} $edge><ChromeIcon /></TaskItem>
        <TaskItem $width={62} $active $edge><AppTiles size={31} /></TaskItem>
        <TaskItem $width={4} $edge />
        <Tray>
          <TrayIcon $width={18}>
            <svg width="9" height="5" viewBox="0 0 9 5"><path d="M0 5l4.500-5L9 5z" fill="#111" /></svg>
          </TrayIcon>
          <TrayIcon $width={5} />
          <TrayIcon $width={27}><FlagTray /></TrayIcon>
          <TrayIcon $width={27}><NetworkTray /></TrayIcon>
          <TrayIcon $width={27}><SpeakerTray /></TrayIcon>
          <TrayIcon $width={7} />
          <Clock>
            <div>2:28 PM</div>
            <div>9/27/2024</div>
          </Clock>
        </Tray>
      </Taskbar>

      <Dialog>
        <DialogTitle>BDDsw</DialogTitle>
        <DialogClose><CloseCross size={11} weight={2.4} /></DialogClose>
        <DialogMessage>Column count doesn't match value count at row 1</DialogMessage>
        <DialogFooter>
          <OkButton>OK</OkButton>
        </DialogFooter>
      </Dialog>
      <Pointer width="15" height="24" viewBox="0 0 15 24">
        <path d="M1 1v17l4-4 3 8 3-1-3-8h5.500z" fill="#ffffff" stroke="#333" strokeWidth="1.200" />
      </Pointer>
      <Watermark>
        <WatermarkTitle>Activate Windows</WatermarkTitle>
        <WatermarkLine>Go to System in Control Panel to</WatermarkLine>
        <WatermarkLine>activate Windows.</WatermarkLine>
      </Watermark>
    </Screen>
  );
}

export default App;
